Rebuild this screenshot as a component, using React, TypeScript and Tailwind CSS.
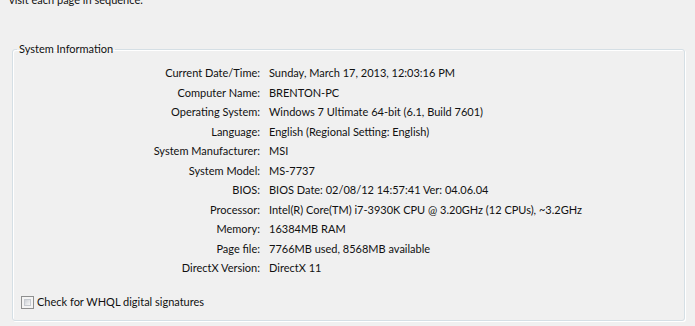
export default function App() {
  const rows = [
    { label: "Current Date/Time:", value: "Sunday, March 17, 2013, 12:03:16 PM" },
    { label: "Computer Name:", value: "BRENTON-PC" },
    { label: "Operating System:", value: "Windows 7 Ultimate 64-bit (6.1, Build 7601)" },
    { label: "Language:", value: "English (Regional Setting: English)" },
    { label: "System Manufacturer:", value: "MSI" },
    { label: "System Model:", value: "MS-7737" },
    { label: "BIOS:", value: "BIOS Date: 02/08/12 14:57:41 Ver: 04.06.04" },
    { label: "Processor:", value: "Intel(R) Core(TM) i7-3930K CPU @ 3.20GHz (12 CPUs), ~3.2GHz" },
    { label: "Memory:", value: "16384MB RAM" },
    { label: "Page file:", value: "7766MB used, 8568MB available" },
    { label: "DirectX Version:", value: "DirectX 11" },
  ];

  return (
    <div className="w-[695px] h-[326px] overflow-hidden bg-[#f0f0f0] text-[#111] text-[11px] font-['Lato','Liberation_Sans',sans-serif]">
      <div className="mt-[-8px] pl-[9px] leading-[15px]">visit each page in sequence.</div>

      <fieldset className="ml-[12px] mt-[35px] w-[673px] h-[279px] border border-[#d5dfe5] rounded-[3px] shadow-[1px_1px_0_#ffffff,inset_1px_1px_0_#ffffff]">
        <legend className="ml-[4px] px-[2px] leading-[14px]">System Information</legend>

        <div className="pt-[7px] grid grid-cols-[247px_1fr] gap-x-[9px]">
          {rows.map((r) => (
            <div key={r.label} className="contents">
              <div className="h-[19.5px] leading-[19.5px] text-right whitespace-nowrap">{r.label}</div>
              <div className="h-[19.5px] leading-[19.5px] whitespace-nowrap">{r.value}</div>
            </div>
          ))}
        </div>

        <label className="mt-[15px] ml-[8px] flex items-center gap-[3px] h-[20px]">
          <span className="w-[13px] h-[13px] border border-[#8e8f8f] bg-[#f4f4f4] p-[2px] flex">
            <span className="flex-1 border border-[#c6cad0] bg-gradient-to-br from-[#cdd1d6] to-[#f7f7f7]" />
          </span>
          <span>Check for WHQL digital signatures</span>
        </label>
      </fieldset>
    </div>
  );
}
